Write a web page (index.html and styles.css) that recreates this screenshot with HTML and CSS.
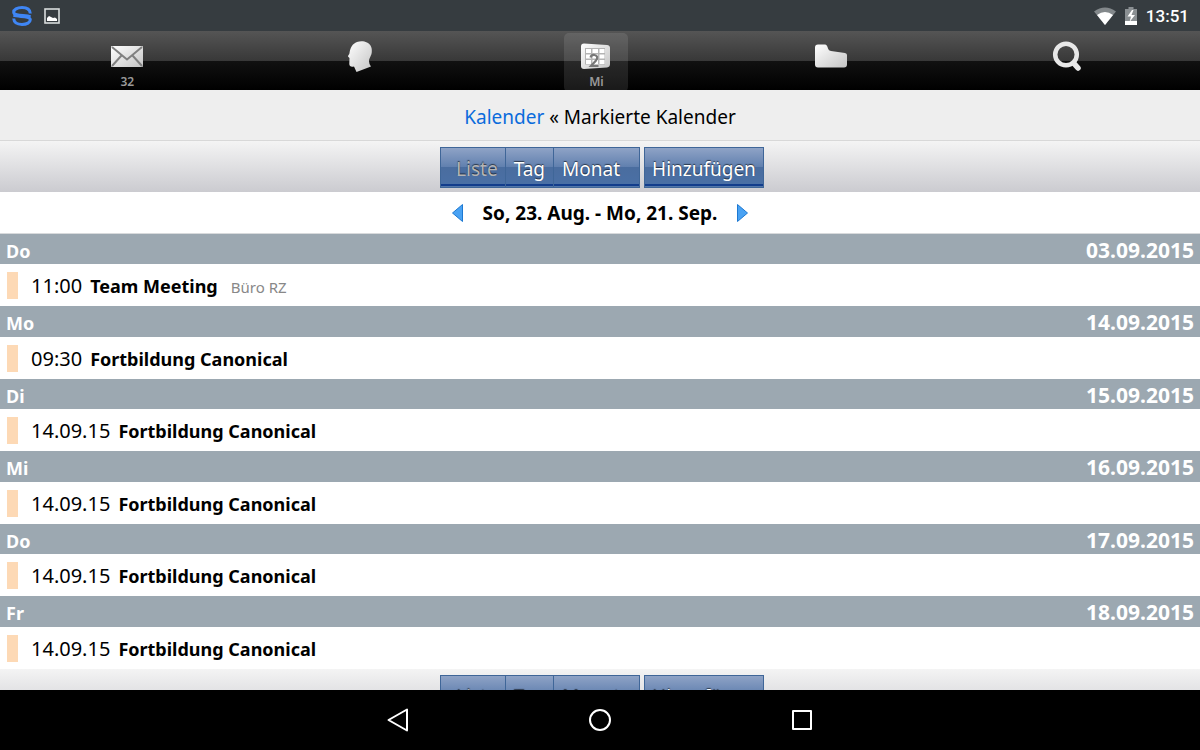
FILE: index.html
```html
<!DOCTYPE html>
<html lang="de">
<head>
<meta charset="utf-8">
<meta name="viewport" content="width=device-width, initial-scale=1">
<title>Markierte Kalender</title>
<link rel="stylesheet" href="styles.css">
</head>
<body>
<div class="device">
  <header class="status">
    <div class="status-group">
      <svg class="logo" viewBox="0 0 20 20" width="20" height="20" fill="none" stroke="#3f86f5" stroke-width="3"><path d="M18.300 7.500C18 3.500 14.500 1.600 10 1.600C5 1.600 1.700 3.600 1.700 6.200C1.700 10.300 14 8.800 18.500 10.800"/><path d="M1.700 12.500C2 16.500 5.500 18.400 10 18.400C15 18.400 18.300 16.400 18.300 13.800C18.300 9.700 6 11.200 1.500 9.200"/></svg>
      <svg viewBox="0 0 16 16" width="16" height="16"><rect x="1" y="1" width="14" height="14" fill="none" stroke="#d9dcdd" stroke-width="1.6"/><path d="M3 13V10L5 8l2 1 2 1 2-.5L13 11v2z" fill="#fff"/></svg>
    </div>
    <div class="status-group">
      <svg viewBox="0 0 22 18" width="22" height="18"><path d="M0 4.500Q11-3.500 22 4.500L11 18z" fill="#83888b"/><path d="M3 8Q11 2 19 8L11 18z" fill="#fff"/></svg>
      <svg viewBox="0 0 12 18" width="12" height="18"><path d="M3.500 0h5v2H12v16H0V2h3.500z" fill="#8b9093"/><path d="M0 14h12v4H0z" fill="#fff"/><path d="M7 3L2.500 9.500H6L4.500 15 10 8H6.500L8.500 3z" fill="#fff"/></svg>
      <time class="clock">13:51</time>
    </div>
  </header>

  <nav class="tabs" aria-label="Anwendungen">
    <a class="tab" href="#mail" aria-label="Mail">
      <svg viewBox="0 0 32 32" width="32" height="32"><defs><linearGradient id="g" x1="0" y1="0" x2="1" y2="1"><stop offset="0" stop-color="#fff"/><stop offset="1" stop-color="#c4c4c4"/></linearGradient></defs><rect y="6" width="32" height="21" rx="1" fill="url(#g)"/><path d="M1 7l15 12.500L31 7M1 26l9.500-10.500M31 26L21.500 15.500" fill="none" stroke="#808080" stroke-width="2"/></svg>
      <span class="tab-label">32</span>
    </a>
    <a class="tab" href="#kontakte" aria-label="Kontakte">
      <svg viewBox="0 0 32 32" width="32" height="32"><path d="M11 2C14 .8 18 .8 21 2.500C25 4.500 26.200 8 25.800 12C25.500 16 23 18 23 21Q23 24 25 26.500L10.500 32L8 26.500C5 27 3.500 26.500 3.300 24L3.500 18L2 16.500C2 15 3.500 14.500 3.500 13C4 8 6.500 3.500 11 2z" fill="url(#g)"/></svg>
    </a>
    <a class="tab tab-active" href="#kalender" aria-label="Kalender" aria-current="page">
      <svg viewBox="0 0 32 32" width="32" height="32"><path d="M4 3.500l23 1.500q3 .3 3 3v16q0 3-3 3.500L4 29q-3 0-3-3V6.500q0-3 3-3z" fill="url(#g)"/><path d="M5 8h20v16.500H5z" fill="#b4b4b4"/><path d="M6 9h5v4H6zM12.500 9h5.500v4h-5.500zM19.500 9h5v4h-5zM6 14.500h5v4H6zM12.500 14.500h5.500v4h-5.500zM19.500 14.500h5v4h-5zM6 20h5v4H6zM12.500 20h5.500v4h-5.500zM19.500 20h5v4h-5z" fill="#fff"/><path d="M10.500 17.500q1-3 4-2.500q4.500 1 1.500 5.500l-5 5.500h7.500" fill="none" stroke="#777" stroke-width="2.200"/></svg>
      <span class="tab-label">Mi</span>
    </a>
    <a class="tab" href="#dateien" aria-label="Dateien">
      <svg viewBox="0 0 32 32" width="32" height="32"><path d="M3 4.500h7q2 0 3 4q.5 2 3 2.500l14 2q2 .3 2 2v9.500q0 3-3 3H3q-3 0-3-3V7.500q0-3 3-3z" fill="url(#g)"/></svg>
    </a>
    <a class="tab" href="#suche" aria-label="Suche">
      <svg viewBox="0 0 32 32" width="32" height="32" fill="none" stroke="#e8e8e8"><circle cx="16" cy="14.500" r="10.800" stroke-width="4.500"/><path d="M24 23.500l4 4.500" stroke-width="5.500" stroke-linecap="round"/></svg>
    </a>
  </nav>

  <main class="content">
    <div class="crumbs"><a href="#kalender">Kalender</a> « Markierte Kalender</div>
    <div class="toolbar">
      <div class="views">
        <button class="btn btn-list" type="button" disabled>Liste</button>
        <button class="btn" type="button">Tag</button>
        <button class="btn btn-month" type="button">Monat</button>
      </div>
      <button class="btn btn-add" type="button">Hinzufügen</button>
    </div>
    <div class="range">
      <button class="step" type="button" aria-label="Zurück"><svg viewBox="0 0 11 18" width="11" height="18"><path d="M10.500.5v17L.5 9z" fill="#49a2f3" stroke="#1d78d2"/></svg></button>
      <h1 class="range-title">So, 23. Aug. - Mo, 21. Sep.</h1>
      <button class="step" type="button" aria-label="Weiter"><svg viewBox="0 0 11 18" width="11" height="18"><path d="M.5.5v17L10.500 9z" fill="#49a2f3" stroke="#1d78d2"/></svg></button>
    </div>

    <section class="days">
      <h2 class="day"><span>Do</span><time class="date">03.09.2015</time></h2>
      <div class="event"><span class="mark"></span><time class="when">11:00</time><strong class="title">Team Meeting</strong><span class="place">Büro RZ</span></div>
      <h2 class="day"><span>Mo</span><time class="date">14.09.2015</time></h2>
      <div class="event"><span class="mark"></span><time class="when">09:30</time><strong class="title">Fortbildung Canonical</strong></div>
      <h2 class="day"><span>Di</span><time class="date">15.09.2015</time></h2>
      <div class="event"><span class="mark"></span><time class="when">14.09.15</time><strong class="title">Fortbildung Canonical</strong></div>
      <h2 class="day"><span>Mi</span><time class="date">16.09.2015</time></h2>
      <div class="event"><span class="mark"></span><time class="when">14.09.15</time><strong class="title">Fortbildung Canonical</strong></div>
      <h2 class="day"><span>Do</span><time class="date">17.09.2015</time></h2>
      <div class="event"><span class="mark"></span><time class="when">14.09.15</time><strong class="title">Fortbildung Canonical</strong></div>
      <h2 class="day"><span>Fr</span><time class="date">18.09.2015</time></h2>
      <div class="event"><span class="mark"></span><time class="when">14.09.15</time><strong class="title">Fortbildung Canonical</strong></div>
    </section>

    <div class="toolbar">
      <div class="views">
        <button class="btn btn-list" type="button" disabled>Liste</button>
        <button class="btn" type="button">Tag</button>
        <button class="btn btn-month" type="button">Monat</button>
      </div>
      <button class="btn btn-add" type="button">Hinzufügen</button>
    </div>
  </main>

  <footer class="system">
    <button class="key" type="button" aria-label="Zurück"><svg viewBox="0 0 24 24" width="24" height="24"><path d="M21 1.500v21L2.500 12z"/></svg></button>
    <button class="key" type="button" aria-label="Startseite"><svg viewBox="0 0 24 24" width="24" height="24"><circle cx="12" cy="12" r="10"/></svg></button>
    <button class="key" type="button" aria-label="Übersicht"><svg viewBox="0 0 24 24" width="24" height="24"><rect x="3" y="3" width="18" height="18"/></svg></button>
  </footer>
</div>
</body>
</html>
```
FILE: styles.css
```css
* { box-sizing: border-box; }

body {
  margin: 0;
  font-family: "Noto Sans", "Open Sans", sans-serif;
  font-size: 19px;
  line-height: 26px;
  color: #000;
  background: #fff;
}

.device { display: flex; flex-direction: column; height: 100vh; }

button { font: inherit; cursor: pointer; }

.status {
  display: flex;
  justify-content: space-between;
  align-items: center;
  flex: none;
  height: 31px;
  padding: 0 11px 0 12px;
  background: #363c40;
}
.status-group { display: flex; align-items: center; gap: 9px; }
.status-group:first-child { gap: 12px; }
.clock { font: 500 17px/30px Roboto, sans-serif; color: #fff; }

.tabs {
  display: grid;
  grid-template-columns: repeat(5, 1fr);
  justify-items: center;
  flex: none;
  height: 59px;
  padding: 2px 17px 2px 10px;
  background: linear-gradient(#555 0, #383838 30px, #111 30px, #000 100%);
}
.tab {
  display: flex;
  flex-direction: column;
  align-items: center;
  width: 64px;
  padding-top: 7px;
  border-radius: 5px;
  text-decoration: none;
}
.tab-active { background: rgba(255, 255, 255, .1); }
.tab svg { flex: none; }
.tab-label { font-size: 12px; font-weight: 600; line-height: 20px; color: #999; }

.content { flex: 1; min-height: 0; overflow: hidden; }

.crumbs {
  height: 51px;
  padding-top: 13px;
  text-align: center;
  line-height: 28px;
  background: #eee;
  border-bottom: 1px solid #d8d8d8;
}
.crumbs a { color: #0a6bdc; text-decoration: none; }

.toolbar {
  display: flex;
  justify-content: center;
  gap: 4px;
  height: 51px;
  padding: 6px 0 4px 4px;
  background: linear-gradient(#f4f4f4, #cbcbd0);
}
.views { display: flex; }
.btn {
  height: 41px;
  padding: 3px 8px 0;
  border: 1px solid #3f6698;
  color: #fff;
  text-shadow: 0 -1px 1px rgba(0, 0, 0, .6);
  background: linear-gradient(#8fa3c6, #5f7fae 50%, #4a6d9f 50%, #4a70a6);
  box-shadow: inset 0 -1px #5377aa, inset 0 -3px #123d8c;
}
.views .btn + .btn { border-left: 0; }
.views .btn-list { padding-left: 15px; padding-right: 7px; color: #b4b4b4; }
.views .btn-month { padding-right: 19px; }
.btn-add { padding-left: 7px; padding-right: 7px; }

.range {
  display: flex;
  justify-content: center;
  align-items: center;
  gap: 20px;
  height: 42px;
  border-bottom: 1px solid #d8dadc;
}
.range-title { margin: 0; font-size: 19px; font-weight: 700; line-height: 26px; }
.step { display: flex; padding: 0; border: 0; background: none; }

.day {
  display: flex;
  justify-content: space-between;
  height: 30px;
  margin: 0;
  padding: 3px 6px 0;
  font-size: 18px;
  font-weight: 700;
  line-height: 28px;
  color: #fff;
  background: #9ca8b1;
}
.day:nth-of-type(even) { height: 31px; }
.date { font-size: 21px; line-height: 26px; }

.event {
  display: flex;
  align-items: baseline;
  height: 42px;
  padding: 8px 0 0 7px;
  line-height: 28px;
}
.mark { align-self: flex-start; width: 11px; height: 27px; margin-right: 13px; background: #fdd9b5; }
.when { font-size: 20px; }
.title { margin-left: 8px; font-size: 18px; }
.place { margin-left: 13px; font-size: 15px; color: #888; }

.system {
  display: flex;
  justify-content: center;
  flex: none;
  height: 60px;
  background: #000;
}
.key {
  display: flex;
  justify-content: center;
  align-items: center;
  width: 202px;
  padding: 0;
  border: 0;
  background: none;
}
.key svg { fill: none; stroke: #fff; stroke-width: 2; stroke-linejoin: round; }
```
